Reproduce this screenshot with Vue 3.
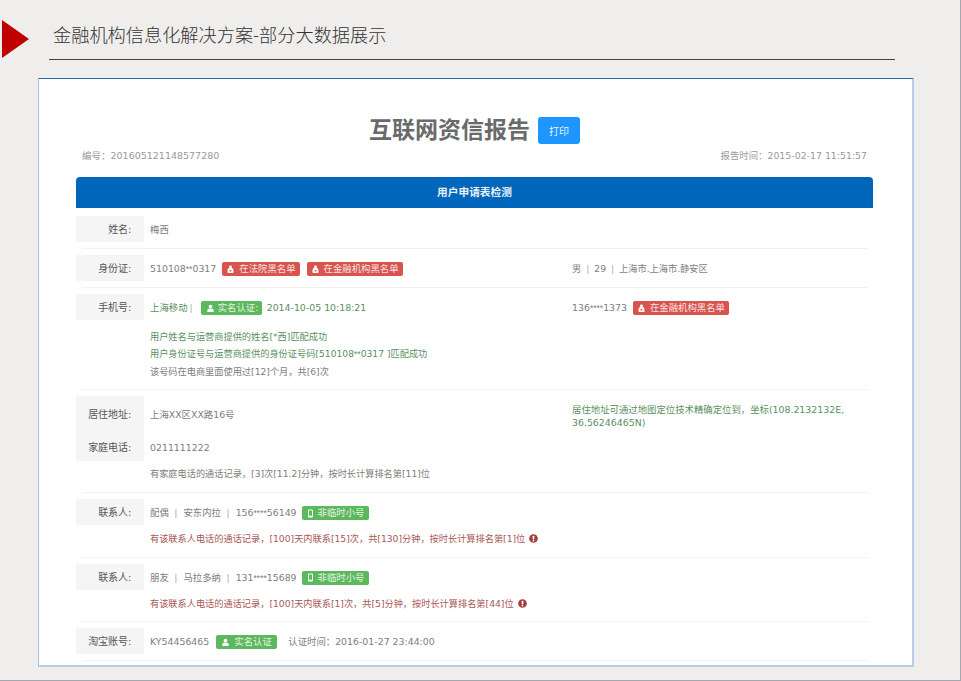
<script setup>
const contacts = [
  { relation: '配偶', name: '安东内拉', head: '156', tail: '56149', note: '有该联系人电话的通话记录，[100]天内联系[15]次，共[130]分钟，按时长计算排名第[1]位' },
  { relation: '朋友', name: '马拉多纳', head: '131', tail: '15689', note: '有该联系人电话的通话记录，[100]天内联系[1]次，共[5]分钟，按时长计算排名第[44]位' },
]
</script>

<template>
  <div class="page">
    <header class="head">
      <span class="arrow"></span>
      <h1 class="head-title">金融机构信息化解决方案-部分大数据展示</h1>
    </header>

    <section class="card">
      <div class="report-title">
        <h2>互联网资信报告</h2>
        <button class="print" type="button">打印</button>
      </div>
      <div class="meta">
        <span class="serial">编号：201605121148577280</span>
        <span>报告时间：2015-02-17 11:51:57</span>
      </div>

      <div class="banner">用户申请表检测</div>

      <div class="row">
        <div class="line">
          <div class="label">姓名:</div>
          <div class="value">梅西</div>
        </div>
      </div>

      <div class="row">
        <div class="line">
          <div class="label">身份证:</div>
          <div class="value">
            510108<span class="mask">**</span>0317
            <span class="badge red">
              <svg class="ico" viewBox="0 0 10 10" aria-hidden="true"><path fill="#fff" fill-rule="evenodd" d="M3.400 2.100a1.600 1.600 0 0 1 3.200 0c0 .5-.2.9-.5 1.200h.6c1 .4 1.600 1.600 1.600 3.100v1.700c0 .5-.3.9-.8.9H2.500c-.5 0-.8-.4-.8-.9V6.400c0-1.500.6-2.700 1.600-3.100h.6c-.3-.3-.5-.7-.5-1.200zM4 5.500v1.600h2V5.500z"/></svg>
              在法院黑名单
            </span>
            <span class="badge red">
              <svg class="ico" viewBox="0 0 10 10" aria-hidden="true"><path fill="#fff" fill-rule="evenodd" d="M3.400 2.100a1.600 1.600 0 0 1 3.200 0c0 .5-.2.9-.5 1.200h.6c1 .4 1.600 1.600 1.600 3.100v1.700c0 .5-.3.9-.8.9H2.500c-.5 0-.8-.4-.8-.9V6.400c0-1.500.6-2.700 1.600-3.100h.6c-.3-.3-.5-.7-.5-1.200zM4 5.500v1.600h2V5.500z"/></svg>
              在金融机构黑名单
            </span>
          </div>
          <div class="side region">男<i class="sep">|</i>29<i class="sep">|</i>上海市.上海市.静安区</div>
        </div>
      </div>

      <div class="row">
        <div class="line">
          <div class="label">手机号:</div>
          <div class="value green">
            上海移动<i class="sep tight">|</i>
            <span class="badge ok first">
              <svg class="ico" viewBox="0 0 10 10" aria-hidden="true"><circle cx="5" cy="2.800" r="2" fill="#fff"/><path fill="#fff" d="M1.500 9V7.300C1.500 5.900 2.500 5 3.800 5h2.400c1.300 0 2.300.9 2.300 2.300V9z"/></svg>
              实名认证:
            </span>
            2014-10-05 10:18:21
          </div>
          <div class="side">
            136<span class="mask">****</span>1373
            <span class="badge red">
              <svg class="ico" viewBox="0 0 10 10" aria-hidden="true"><path fill="#fff" fill-rule="evenodd" d="M3.400 2.100a1.600 1.600 0 0 1 3.200 0c0 .5-.2.9-.5 1.200h.6c1 .4 1.600 1.600 1.600 3.100v1.700c0 .5-.3.9-.8.9H2.500c-.5 0-.8-.4-.8-.9V6.400c0-1.500.6-2.700 1.600-3.100h.6c-.3-.3-.5-.7-.5-1.200zM4 5.500v1.600h2V5.500z"/></svg>
              在金融机构黑名单
            </span>
          </div>
        </div>
        <div class="notes match">
          <p class="green">用户姓名与运营商提供的姓名[*西]匹配成功</p>
          <p class="green">用户身份证号与运营商提供的身份证号码[510108<span class="mask">**</span>0317 ]匹配成功</p>
          <p>该号码在电商里面使用过[12]个月，共[6]次</p>
        </div>
      </div>

      <div class="row">
        <div class="line tall">
          <div class="label">居住地址:</div>
          <div class="value">上海XX区XX路16号</div>
          <div class="side green wrap">居住地址可通过地图定位技术精确定位到，坐标(108.2132132E, 36.56246465N)</div>
        </div>
        <div class="line tall">
          <div class="label">家庭电话:</div>
          <div class="value">0211111222</div>
        </div>
        <div class="notes">
          <p>有家庭电话的通话记录，[3]次[11.2]分钟，按时长计算排名第[11]位</p>
        </div>
      </div>

      <div v-for="c in contacts" :key="c.head" class="row">
        <div class="line">
          <div class="label">联系人:</div>
          <div class="value">
            {{ c.relation }}<i class="sep wide">|</i>{{ c.name }}<i class="sep wide">|</i>{{ c.head }}<span class="mask">****</span>{{ c.tail }}
            <span class="badge ok temp">
              <svg class="ico" viewBox="0 0 10 10" aria-hidden="true"><path fill="#fff" fill-rule="evenodd" d="M3.200.5h3.600c.5 0 .9.4.9.9v7.200c0 .5-.4.9-.9.9H3.200c-.5 0-.9-.4-.9-.9V1.400c0-.5.4-.9.900-.9zM3.300 1.800v5.700h3.400V1.800z"/></svg>
              非临时小号
            </span>
          </div>
        </div>
        <div class="notes contact">
          <p class="warn">
            {{ c.note }}
            <svg class="alert" viewBox="0 0 10 10" aria-hidden="true"><circle cx="5" cy="5" r="4.800" fill="#a33c3c"/><rect x="4.100" y="1.900" width="1.800" height="3.900" rx=".6" fill="#fff"/><rect x="4.100" y="6.500" width="1.800" height="1.700" rx=".5" fill="#fff"/></svg>
          </p>
        </div>
      </div>

      <div class="row">
        <div class="line">
          <div class="label">淘宝账号:</div>
          <div class="value">
            KY54456465
            <span class="badge ok taobao">
              <svg class="ico" viewBox="0 0 10 10" aria-hidden="true"><circle cx="5" cy="2.800" r="2" fill="#fff"/><path fill="#fff" d="M1.500 9V7.300C1.500 5.900 2.500 5 3.800 5h2.400c1.300 0 2.300.9 2.300 2.300V9z"/></svg>
              实名认证
            </span>
            <span class="auth-time">认证时间：2016-01-27 23:44:00</span>
          </div>
        </div>
      </div>
    </section>
  </div>
</template>

<style scoped>
.page {
  box-sizing: border-box;
  width: 961px;
  height: 681px;
  overflow: hidden;
  background: #efeeec;
  border-right: 1px solid #a4a7ae;
  border-bottom: 1px solid #a4a7ae;
  padding-top: 20px;
  font-family: "DejaVu Sans", "Noto Sans CJK SC", sans-serif;
  font-size: 9.400px;
  color: #7d7d7d;
}

.head {
  display: flex;
  height: 40px;
  padding-left: 2px;
}

.arrow {
  width: 0;
  height: 0;
  border-left: 27px solid #c00000;
  border-top: 19.500px solid transparent;
  border-bottom: 19.500px solid transparent;
}

.head-title {
  width: 842px;
  margin: 0 0 0 20px;
  padding-left: 4px;
  border-bottom: 1px solid #444;
  font-family: "Noto Sans CJK SC", sans-serif;
  font-size: 18.200px;
  font-weight: 300;
  line-height: 28px;
  color: #333;
}

.card {
  box-sizing: border-box;
  width: 876px;
  height: 589px;
  margin: 18px 0 0 38px;
  padding: 38px 39px 0 37px;
  background: #fff;
  border-top: 1px solid #2a6aa0;
  border-left: 1px solid #a9c2dc;
  border-right: 2px solid #b5cde5;
  border-bottom: 2px solid #b5cde5;
}

.report-title {
  display: flex;
  justify-content: center;
  align-items: flex-start;
  gap: 8px;
}

.report-title h2 {
  margin: 0;
  font-family: "Noto Sans CJK SC", sans-serif;
  font-size: 23px;
  font-weight: 700;
  line-height: 23px;
  color: #6a6a6a;
}

.print {
  width: 42px;
  height: 27px;
  padding: 0;
  border: 0;
  border-radius: 3px;
  background: #1e96ff;
  color: #e6f3ff;
  font-family: "Noto Sans CJK SC", sans-serif;
  font-size: 10px;
}

.meta {
  display: flex;
  justify-content: space-between;
  margin-top: 6px;
  padding: 0 6px;
  line-height: 12px;
  color: #999;
}

.serial {
  font-size: 9.500px;
}

.banner {
  height: 31px;
  margin-top: 15px;
  margin-bottom: 2px;
  border-radius: 4px 4px 0 0;
  background: #0066bb;
  color: #e8f1f8;
  font-family: "Noto Sans CJK SC", sans-serif;
  font-size: 10.700px;
  font-weight: 700;
  line-height: 30px;
  text-align: center;
}

.row {
  margin: 0 5px 0 6px;
  padding: 6px 0;
  border-bottom: 1px solid #f2f2f2;
}

.line {
  display: grid;
  grid-template-columns: 68px 416px 1fr;
  grid-auto-rows: 26px;
  column-gap: 6px;
  margin-left: -6px;
  line-height: 27px;
}

.line.tall {
  grid-auto-rows: 32.500px;
  line-height: 38px;
}

.label {
  padding-right: 12.500px;
  background: #f5f5f5;
  color: #555;
  font-size: 10px;
  text-align: right;
}

.value,
.side {
  white-space: nowrap;
}

.side.wrap {
  align-self: start;
  margin-top: 7px;
  line-height: 13px;
  white-space: normal;
}

.side.region {
  font-size: 9.200px;
}

.green {
  color: #5a8f63;
}

.mask {
  font-family: "Liberation Sans", sans-serif;
  font-size: 8.500px;
}

.sep {
  margin: 0 5px;
  font-style: normal;
  color: #aaa;
}

.sep.tight {
  margin: 0 2px;
}

.sep.wide {
  margin: 0 6px 0 5.500px;
}

.badge {
  display: inline-flex;
  align-items: center;
  gap: 4px;
  height: 14px;
  margin-top: -1px;
  margin-left: 3px;
  margin-right: 4px;
  padding: 0 4px;
  border-radius: 2px;
  color: #f6e3e2;
  line-height: 14px;
  vertical-align: middle;
}

.badge.red {
  background: #d9534f;
}

.badge.ok {
  background: #5cb85c;
  color: #e6f4e6;
}

.badge.first {
  box-sizing: border-box;
  width: 61px;
  margin-left: 6px;
  margin-right: 2px;
  padding: 0 0 0 5px;
  gap: 3px;
}

.badge.temp {
  box-sizing: border-box;
  width: 67px;
  margin-left: 2px;
  padding: 0 0 0 4px;
  gap: 3px;
}

.badge.taobao {
  box-sizing: border-box;
  width: 61px;
  margin-left: 4px;
  margin-right: 4px;
  padding: 0 0 0 5px;
}

.ico {
  width: 9px;
  height: 9px;
  flex: none;
}

.auth-time {
  margin-left: 7px;
}

.notes {
  padding: 4px 0;
  margin-left: 68px;
  font-size: 9.200px;
  line-height: 17px;
}

.notes.match {
  padding: 8px 0 3px;
}

.notes.contact {
  padding: 5px 0 3.500px;
}

.notes p {
  margin: 0;
}

.notes .warn {
  color: #a85757;
}

.alert {
  width: 9px;
  height: 9px;
  margin-left: 1px;
  vertical-align: -1px;
}
</style>
